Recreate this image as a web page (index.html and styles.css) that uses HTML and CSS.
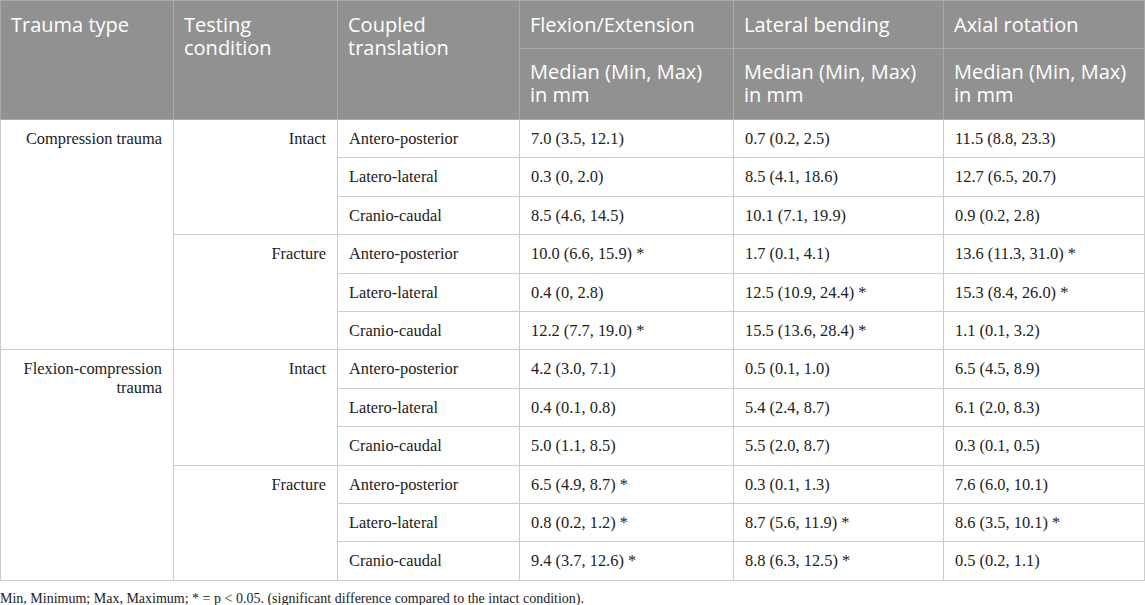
FILE: index.html
```html
<!DOCTYPE html>
<html>
<head>
<meta charset="utf-8">
<link rel="stylesheet" href="styles.css">
</head>
<body>
<table class="data">
  <colgroup>
    <col class="c1"><col class="c2"><col class="c3"><col class="c4"><col class="c5"><col class="c6">
  </colgroup>
  <thead>
    <tr class="h1">
      <th rowspan="2">Trauma type</th>
      <th rowspan="2">Testing condition</th>
      <th rowspan="2">Coupled translation</th>
      <th>Flexion/Extension</th>
      <th>Lateral bending</th>
      <th>Axial rotation</th>
    </tr>
    <tr class="h2">
      <th><span class="ln">Median (Min, Max)</span><span class="ln">in mm</span></th>
      <th><span class="ln">Median (Min, Max)</span><span class="ln">in mm</span></th>
      <th><span class="ln">Median (Min, Max)</span><span class="ln">in mm</span></th>
    </tr>
  </thead>
  <tbody>
    <tr>
      <td rowspan="6" class="r">Compression trauma</td>
      <td rowspan="3" class="r">Intact</td>
      <td>Antero-posterior</td><td>7.0 (3.5, 12.1)</td><td>0.7 (0.2, 2.5)</td><td>11.5 (8.8, 23.3)</td>
    </tr>
    <tr><td>Latero-lateral</td><td>0.3 (0, 2.0)</td><td>8.5 (4.1, 18.6)</td><td>12.7 (6.5, 20.7)</td></tr>
    <tr><td>Cranio-caudal</td><td>8.5 (4.6, 14.5)</td><td>10.1 (7.1, 19.9)</td><td>0.9 (0.2, 2.8)</td></tr>
    <tr>
      <td rowspan="3" class="r">Fracture</td>
      <td>Antero-posterior</td><td>10.0 (6.6, 15.9) *</td><td>1.7 (0.1, 4.1)</td><td>13.6 (11.3, 31.0) *</td>
    </tr>
    <tr><td>Latero-lateral</td><td>0.4 (0, 2.8)</td><td>12.5 (10.9, 24.4) *</td><td>15.3 (8.4, 26.0) *</td></tr>
    <tr><td>Cranio-caudal</td><td>12.2 (7.7, 19.0) *</td><td>15.5 (13.6, 28.4) *</td><td>1.1 (0.1, 3.2)</td></tr>
    <tr>
      <td rowspan="6" class="r">Flexion-compression<br>trauma</td>
      <td rowspan="3" class="r">Intact</td>
      <td>Antero-posterior</td><td>4.2 (3.0, 7.1)</td><td>0.5 (0.1, 1.0)</td><td>6.5 (4.5, 8.9)</td>
    </tr>
    <tr><td>Latero-lateral</td><td>0.4 (0.1, 0.8)</td><td>5.4 (2.4, 8.7)</td><td>6.1 (2.0, 8.3)</td></tr>
    <tr><td>Cranio-caudal</td><td>5.0 (1.1, 8.5)</td><td>5.5 (2.0, 8.7)</td><td>0.3 (0.1, 0.5)</td></tr>
    <tr>
      <td rowspan="3" class="r">Fracture</td>
      <td>Antero-posterior</td><td>6.5 (4.9, 8.7) *</td><td>0.3 (0.1, 1.3)</td><td>7.6 (6.0, 10.1)</td>
    </tr>
    <tr><td>Latero-lateral</td><td>0.8 (0.2, 1.2) *</td><td>8.7 (5.6, 11.9) *</td><td>8.6 (3.5, 10.1) *</td></tr>
    <tr><td>Cranio-caudal</td><td>9.4 (3.7, 12.6) *</td><td>8.8 (6.3, 12.5) *</td><td>0.5 (0.2, 1.1)</td></tr>
  </tbody>
</table>
<p class="note">Min, Minimum; Max, Maximum; * = p &lt; 0.05. (significant difference compared to the intact condition).</p>
</body>
</html>
```

FILE: styles.css
```css
html, body {
  margin: 0;
  padding: 0;
  background: #ffffff;
}
.data {
  width: 1144px;
  border-collapse: collapse;
  table-layout: fixed;
}
.c1 { width: 173px; }
.c2 { width: 164px; }
.c3 { width: 182px; }
.c4 { width: 214px; }
.c5 { width: 210px; }
.c6 { width: 201px; }

.data th {
  background: #919191;
  color: #ffffff;
  font-family: "Open Sans", Lato, sans-serif;
  font-weight: normal;
  font-size: 20px;
  line-height: 23px;
  text-align: left;
  vertical-align: top;
  padding: 12px 10px 8px 10px;
  border: 1px solid #a9a9a9;
}
.data tr.h1 th { height: 27px; }
.data tr.h2 th { height: 51px; padding-top: 11px; }
.data th .ln { display: block; }

.data td {
  font-family: "Liberation Serif", "Times New Roman", serif;
  font-size: 16.4px;
  line-height: 19px;
  color: #222222;
  vertical-align: top;
  text-align: left;
  padding: 9px 11px 9.4px 11px;
  border: 1px solid #cccccc;
}
.data td.r { text-align: right; }

.note {
  margin: 9px 0 0 0;
  font-family: "Liberation Serif", "Times New Roman", serif;
  font-size: 14px;
  line-height: 18px;
  color: #222222;
}
```
